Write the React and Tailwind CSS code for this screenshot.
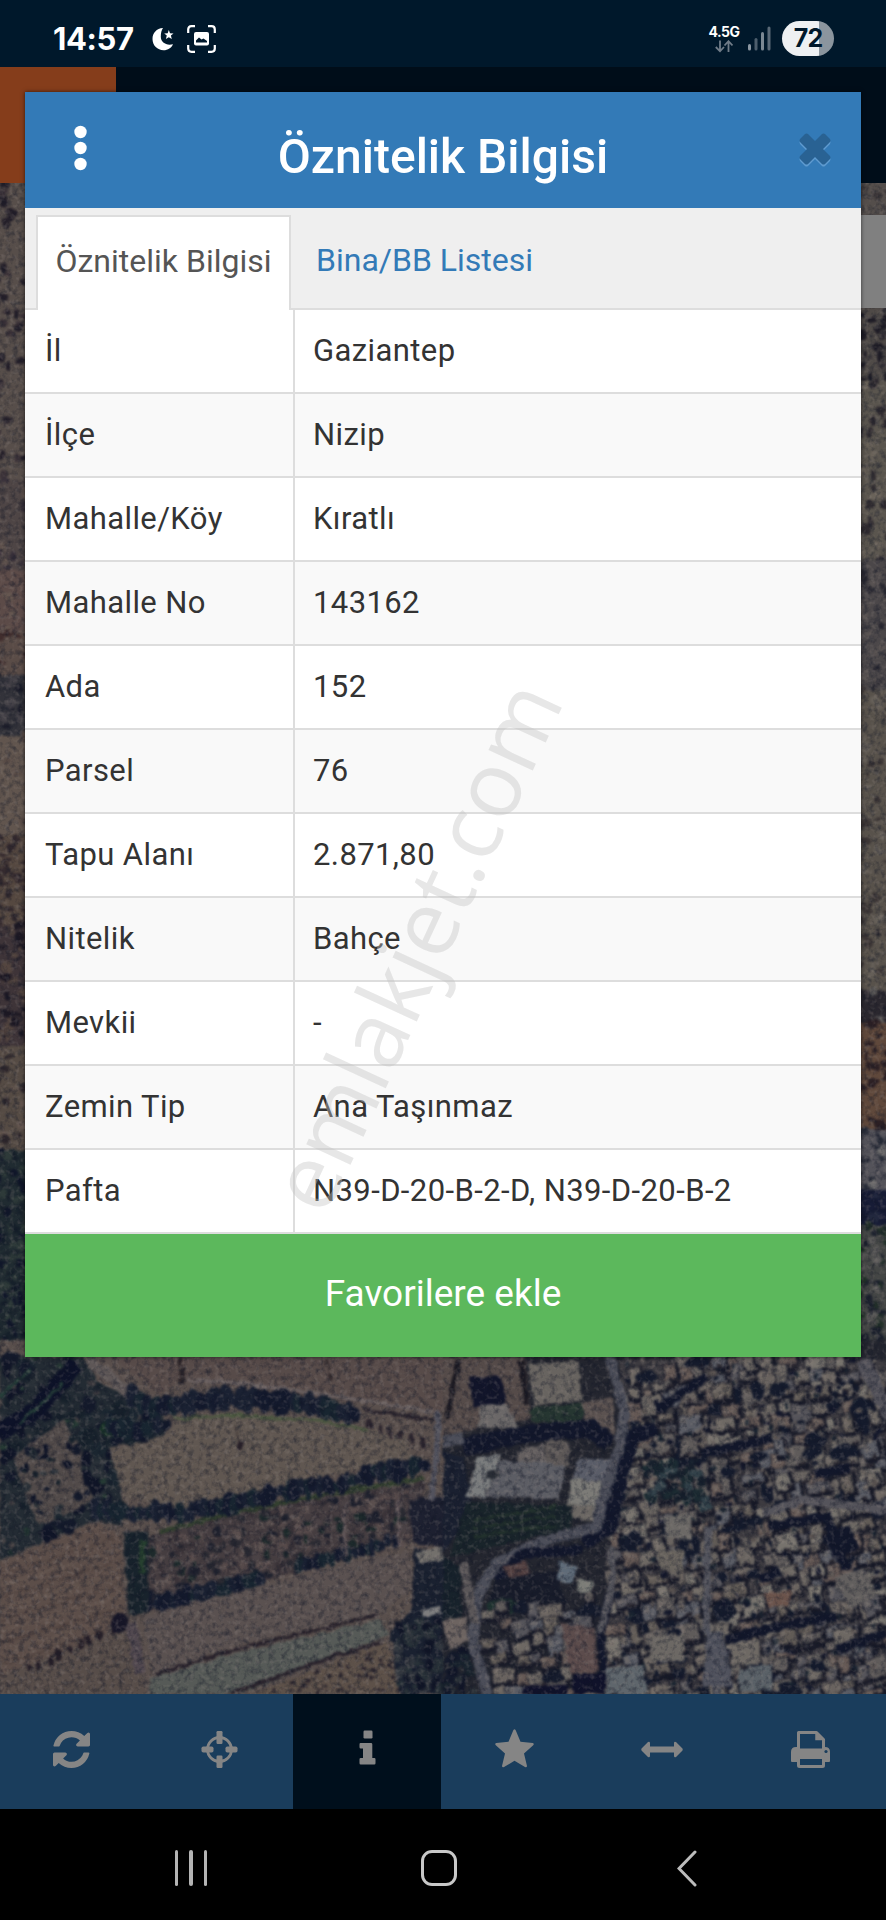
import React from 'react'

const rows = [
  { label: 'İl', value: 'Gaziantep' },
  { label: 'İlçe', value: 'Nizip' },
  { label: 'Mahalle/Köy', value: 'Kıratlı' },
  { label: 'Mahalle No', value: '143162' },
  { label: 'Ada', value: '152' },
  { label: 'Parsel', value: '76' },
  { label: 'Tapu Alanı', value: '2.871,80' },
  { label: 'Nitelik', value: 'Bahçe' },
  { label: 'Mevkii', value: '-' },
  { label: 'Zemin Tip', value: 'Ana Taşınmaz' },
  { label: 'Pafta', value: 'N39-D-20-B-2-D, N39-D-20-B-2' },
]

// small seeded generator so the map looks the same on every render
function rng(seed) {
  let s = seed
  return () => {
    s = (s * 1664525 + 1013904223) % 4294967296
    return s / 4294967296
  }
}

function inside(px, py, pts) {
  let hit = false
  for (let i = 0, j = pts.length - 1; i < pts.length; j = i++) {
    const [xi, yi] = pts[i]
    const [xj, yj] = pts[j]
    if (yi > py !== yj > py && px < ((xj - xi) * (py - yi)) / (yj - yi) + xi) hit = !hit
  }
  return hit
}

const toPoints = (pts) => pts.map((p) => p.join(',')).join(' ')

// blobs scattered in a polygon
function Scatter({ area, count, min = 8, max = 22, colors, seed }) {
  const r = rng(seed)
  const xs = area.map((p) => p[0])
  const ys = area.map((p) => p[1])
  const x0 = Math.min(...xs), x1 = Math.max(...xs)
  const y0 = Math.min(...ys), y1 = Math.max(...ys)
  const items = []
  for (let i = 0; i < count; i++) {
    const x = x0 + r() * (x1 - x0)
    const y = y0 + r() * (y1 - y0)
    const rx = min + r() * (max - min)
    const ry = min + r() * (max - min)
    const c = colors[Math.floor(r() * colors.length)]
    if (inside(x, y, area)) items.push(<ellipse key={i} cx={x} cy={y} rx={rx} ry={ry} fill={c} />)
  }
  return <g>{items}</g>
}

// trees standing along a line
function TreeRow({ path, width = 26, step = 17, colors = ['#141a2d', '#1a2132', '#182530'], seed }) {
  const r = rng(seed)
  const items = []
  for (let i = 0; i < path.length - 1; i++) {
    const [ax, ay] = path[i]
    const [bx, by] = path[i + 1]
    const n = Math.max(1, Math.round(Math.hypot(bx - ax, by - ay) / step))
    for (let k = 0; k < n; k++) {
      const t = k / n
      items.push(
        <ellipse
          key={`${i}-${k}`}
          cx={ax + (bx - ax) * t + (r() - 0.5) * 10}
          cy={ay + (by - ay) * t + (r() - 0.5) * 14}
          rx={width * (0.3 + r() * 0.3)}
          ry={width * (0.5 + r() * 0.6)}
          fill={colors[Math.floor(r() * colors.length)]}
        />
      )
    }
  }
  return <g>{items}</g>
}

function Houses({ area, seed, cell = 50 }) {
  const r = rng(seed)
  const roofs = ['#68635f', '#5f5b5a', '#6d6863', '#615b56', '#5a5c64', '#69635f', '#55545a', '#645854', '#77736d']
  const items = []
  const xs = area.map((p) => p[0])
  const ys = area.map((p) => p[1])
  for (let y = Math.min(...ys); y < Math.max(...ys); y += cell) {
    for (let x = Math.min(...xs); x < Math.max(...xs); x += cell) {
      const cx = x + (r() - 0.5) * 30
      const cy = y + (r() - 0.5) * 30
      const w = 24 + r() * 46
      const h = 20 + r() * 40
      const a = -10 + (r() - 0.5) * 16
      const c = roofs[Math.floor(r() * roofs.length)]
      const skip = r() < 0.1
      const tx = (r() - 0.5) * 30
      if (!inside(cx, cy, area)) continue
      items.push(
        <g key={`${x}-${y}`} transform={`translate(${cx} ${cy}) rotate(${a})`}>
          {skip ? (
            <ellipse rx={w * 0.6} ry={h * 0.55} fill="#151b2c" />
          ) : (
            <>
              <rect x={-w / 2 - 3} y={-h / 2 - 2} width={w + 12} height={h + 14} fill="#181a27" />
              <rect x={-w / 2} y={-h / 2} width={w} height={h} fill={c} />
              <rect x={tx} y={h / 2 - 8} width={w * 0.35} height={10} fill="#2a2830" />
              <rect x={-w / 2 + 4} y={-h / 2 + 4} width={w * 0.3} height={h * 0.4} fill="#7b746e" opacity="0.5" />
            </>
          )}
        </g>
      )
    }
  }
  return <g>{items}</g>
}

const DARK = ['#141a2b', '#17212b', '#1b2630', '#101527', '#2a3138']
const BUSH = ['#20222e', '#2a2a32', '#1d2a2b', '#4a4245', '#3a3338', '#564a4a', '#5a4f4e']

const woods = [[0, 50], [250, 50], [300, 130], [440, 190], [510, 250], [490, 290], [330, 320], [365, 470], [370, 560], [290, 540], [0, 660]]
const grove = [[40, 350], [190, 240], [240, 320], [250, 430], [290, 480], [120, 560], [90, 500]]
const field = [[330, 330], [490, 290], [540, 235], [700, 225], [950, 240], [1220, 290], [1235, 355], [1100, 385], [850, 430], [720, 480], [500, 525], [430, 480], [372, 472]]
const scrub = [[440, 590], [730, 500], [1280, 430], [1240, 600], [1050, 650], [800, 720], [560, 790], [440, 815]]
const plowed = [[0, 665], [290, 548], [362, 590], [376, 830], [300, 890], [0, 1010]]
const lowerField = [[430, 830], [700, 760], [1040, 670], [1225, 635], [1240, 740], [1150, 815], [700, 915], [460, 1010]]
const paleStrip = [[450, 1015], [700, 940], [1140, 840], [1165, 885], [720, 1062], [450, 1062]]
const orchard = [[760, 1062], [1160, 905], [1210, 1062]]

function Countryside() {
  return (
    <g transform="translate(0 1340) scale(0.33333)">
      <rect width="1330" height="1080" fill="#594f4c" />
      <polygon points="330,50 1330,50 1330,225 1080,190 850,160 540,120 480,165" fill="#574b49" />
      <path d="M560 120 L740 130 L980 165 L1300 215" stroke="#6a6161" strokeWidth="11" fill="none" />
      <path d="M1090 208 L1300 240" stroke="#29232c" strokeWidth="10" fill="none" />
      <polygon points={toPoints(woods)} fill="#232b33" />
      <Scatter area={woods} count={210} colors={DARK} min={9} max={28} seed={11} />
      <Scatter area={woods} count={70} colors={['#3c4045', '#4b4647', '#263a34']} min={4} max={11} seed={12} />
      <polygon points={toPoints(grove)} fill="#514a49" />
      <Scatter area={grove} count={60} colors={DARK} min={6} max={17} seed={5} />
      <path d="M-10 280 L110 210 L230 70" stroke="#0d1228" strokeWidth="52" fill="none" />
      <path d="M0 170 L90 90 M60 250 L190 130" stroke="#27403a" strokeWidth="9" fill="none" />
      <path d="M265 60 L330 110 L400 175 L430 220" stroke="#5e5757" strokeWidth="32" fill="none" />
      <ellipse cx="340" cy="265" rx="38" ry="28" fill="#1f3d2b" />
      <polygon points={toPoints(field)} fill="#605751" />
      <path d="M520 235 L700 226 L950 242 L1100 270" stroke="#4b5740" strokeWidth="9" fill="none" />
      <ellipse cx="719" cy="316" rx="10" ry="17" fill="#261f28" />
      <path d="M719 300 L706 255" stroke="#453c3a" strokeWidth="4" />
      <TreeRow path={[[400, 165], [450, 205], [690, 175], [880, 185], [1080, 225]]} width={38} seed={3} />
      <TreeRow path={[[330, 260], [410, 270], [490, 255]]} width={32} seed={8} />
      <TreeRow path={[[1110, 260], [1200, 285], [1300, 320]]} width={20} step={34} seed={19} colors={['#2b242d']} />
      <TreeRow path={[[545, 60], [550, 140]]} width={18} seed={17} colors={['#2c2529']} />
      <TreeRow path={[[985, 60], [985, 130]]} width={12} seed={18} colors={['#2c2529']} />
      <polygon points={toPoints(scrub)} fill="#453d40" />
      <Scatter area={scrub} count={520} colors={BUSH} min={5} max={18} seed={21} />
      <path d="M480 575 L740 510 L1000 460 L1270 415" stroke="#33402f" strokeWidth="14" fill="none" />
      <TreeRow path={[[290, 500], [420, 520], [560, 515], [720, 485], [860, 450], [1010, 435], [1110, 400], [1290, 375]]} width={34} seed={6} />
      <TreeRow path={[[450, 790], [580, 765], [800, 715]]} width={34} seed={31} />
      <TreeRow path={[[900, 680], [1050, 640], [1200, 600]]} width={24} seed={32} />
      <path d="M1030 510 L1040 650 M1195 480 L1195 620" stroke="#655a5c" strokeWidth="8" />
      <polygon points={toPoints(plowed)} fill="#5c4e49" />
      {[0, 1, 2, 3, 4, 5, 6, 7, 8].map((i) => (
        <path key={i} d={`M0 ${705 + i * 34} L${i < 7 ? 362 : 300} ${590 + i * 36}`} stroke={i % 2 ? '#685a53' : '#4d403d'} strokeWidth="4" />
      ))}
      <polygon points="0,1010 300,890 390,880 440,1062 0,1062" fill="#574d49" />
      <TreeRow path={[[90, 990], [180, 950], [300, 885], [370, 860]]} width={18} step={34} seed={42} colors={['#241e27']} />
      <ellipse cx="358" cy="850" rx="26" ry="32" fill="#171627" />
      <polygon points="370,575 445,575 445,820 385,825" fill="#18232c" />
      <path d="M428 600 L425 700" stroke="#27402f" strokeWidth="20" />
      <path d="M395 850 L420 1000" stroke="#51484f" strokeWidth="34" />
      <polygon points={toPoints(lowerField)} fill="#5a5150" />
      <polygon points={toPoints(paleStrip)} fill="#565a57" />
      <path d="M470 1002 L700 930 L1130 825" stroke="#28222b" strokeWidth="10" fill="none" />
      <path d="M690 1062 L1010 945 L1140 908" stroke="#28222b" strokeWidth="11" fill="none" />
      <polygon points={toPoints(orchard)} fill="#5d5149" />
      <Scatter area={orchard} count={90} colors={['#2a242c']} min={4} max={8} seed={51} />
      <polygon points="1240,620 1330,640 1330,1062 1200,1062 1170,880 1240,800" fill="#1a2130" />
      <Scatter area={[[1180, 860], [1330, 830], [1330, 1062], [1200, 1062]]} count={80} colors={['#283138', '#101526', '#33383f']} min={7} max={18} seed={52} />
      <polygon points="1250,635 1330,618 1330,660 1255,670" fill="#73706c" />
      <polygon points="1262,810 1320,798 1325,822 1268,830" fill="#7d7d7e" />
      <polygon points="1225,480 1330,470 1330,620 1240,610" fill="#1d2030" />
      <path d="M1315 215 L1310 340 L1295 480" stroke="#52525d" strokeWidth="18" fill="none" />
    </g>
  )
}

const town = [[530, 60], [1330, 60], [1330, 1080], [470, 1080], [500, 560], [560, 300]]
const southBlock = [[130, 800], [480, 760], [470, 1080], [150, 1080]]

function Town() {
  return (
    <g transform="translate(443 1340) scale(0.33333)">
      <rect width="1332" height="1080" fill="#24262f" />
      <polygon points="0,50 245,50 265,240 0,285" fill="#554b49" />
      <path d="M45 60 L10 240 M235 60 L250 190" stroke="#1c1a22" strokeWidth="16" />
      <polygon points="80,112 172,108 190,190 90,205" fill="#12152a" />
      <polygon points="110,195 190,190 225,262 105,265" fill="#6b6868" />
      <polygon points="255,75 405,64 420,180 275,200" fill="#686460" />
      <polygon points="260,205 420,190 420,245 270,245" fill="#263631" />
      <polygon points="415,190 510,170 515,300 440,280" fill="#5b5250" />
      <polygon points={toPoints(town)} fill="#3d3b40" />
      <Houses area={town} seed={77} />
      <Houses area={town} seed={1234} cell={92} />
      <Scatter area={town} count={620} colors={['#141a2b', '#1a2430', '#6d6762', '#14182b', '#57514f', '#625c5a']} min={3} max={11} seed={78} />
      <Scatter area={[[600, 360], [780, 380], [800, 520], [620, 480]]} count={60} colors={['#1c2b32', '#17202c', '#33424a']} min={8} max={20} seed={90} />
      <path d="M640 210 L790 110 M780 340 L990 295 M1115 400 L1220 385 M980 560 L1150 530 L1210 690 M950 720 L1010 690 M850 900 L1000 860 L1180 830 M1180 930 L1330 880" stroke="#12172a" strokeWidth="28" fill="none" />
      <path d="M1180 570 L1210 640" stroke="#12172a" strokeWidth="85" />
      <path d="M60 320 L260 280 L440 265 L500 310" stroke="#12172b" strokeWidth="54" fill="none" />
      <path d="M640 265 L570 290 L535 400 L500 560 L420 610" stroke="#12172b" strokeWidth="44" fill="none" />
      <path d="M500 760 L475 870 L475 1060" stroke="#12172b" strokeWidth="24" fill="none" />
      <polygon points="0,330 60,350 90,500 0,640" fill="#1a2030" />
      <polygon points="105,350 175,343 125,475 70,470" fill="#7a7c7d" />
      <polygon points="170,362 370,362 350,478 128,470" fill="#5c5d64" />
      <polygon points="220,335 300,310 310,365 230,365" fill="#656060" />
      <polygon points="305,300 380,305 378,380 308,370" fill="#5d5857" />
      <ellipse cx="150" cy="404" rx="20" ry="14" fill="#282c34" />
      <polygon points="405,355 505,360 485,425 390,415" fill="#5a5d68" />
      <polygon points="388,415 484,425 462,500 372,495" fill="#7c7b77" />
      <polygon points="368,495 462,500 450,545 362,530" fill="#6b6763" />
      <polygon points="70,485 385,500 385,565 20,650" fill="#19242a" />
      {[0, 1, 2].map((i) => (
        <path key={i} d={`M90 ${540 + i * 25} L340 ${500 + i * 28}`} stroke="#24332d" strokeWidth="8" />
      ))}
      <path d="M500 50 L545 210 L530 320 L490 440 L460 560 L300 605 L160 670 L105 760 L90 900 L135 1070" stroke="#4c4e59" strokeWidth="32" fill="none" strokeLinejoin="round" />
      <path d="M0 305 L60 295" stroke="#4c4e59" strokeWidth="36" />
      <path d="M60 670 L95 850" stroke="#5a5658" strokeWidth="26" />
      <polygon points="0,650 50,680 55,830 0,840" fill="#17222b" />
      <path d="M160 720 L240 640 L420 630" stroke="#12172b" strokeWidth="30" fill="none" />
      <polygon points="180,680 250,660 260,700 215,760" fill="#513f40" />
      <polygon points="160,720 340,690 370,790 130,810" fill="#181c2a" />
      <ellipse cx="180" cy="800" rx="50" ry="24" fill="#1f3330" />
      <polygon points="350,665 405,680 385,735 340,720" fill="#5f6b78" />
      <polygon points="405,715 450,722 440,762 400,755" fill="#7c7d78" />
      <path d="M505 620 L510 720 L470 880" stroke="#53535a" strokeWidth="18" fill="none" />
      <path d="M795 560 L790 870 L825 960 L820 1070" stroke="#52535c" strokeWidth="22" fill="none" />
      <polygon points="790,870 840,880 870,1040 780,1040" fill="#50525d" />
      <path d="M960 520 L1080 480 L1330 510" stroke="#55545b" strokeWidth="26" fill="none" />
      <path d="M1260 60 L1340 230" stroke="#53525a" strokeWidth="42" fill="none" />
      <Houses area={southBlock} seed={15} />
      <polygon points="0,840 70,830 75,900 20,930" fill="#6d6461" />
      <Scatter area={[[0, 930], [70, 930], [110, 1070], [0, 1070]]} count={30} colors={DARK} seed={16} />
      <polygon points="350,850 455,865 468,1000 385,1000" fill="#5c4c4c" />
      <rect x="390" y="1002" width="95" height="60" fill="#10122a" />
      <rect x="240" y="1035" width="135" height="30" fill="#10122a" />
      <polygon points="488,985 600,975 608,1062 490,1062" fill="#5f666c" />
      <polygon points="660,530 745,525 745,600 665,595" fill="#6c6966" />
      <polygon points="640,632 722,630 720,695 655,690" fill="#6a655f" />
      <polygon points="620,890 720,880 725,965 625,960" fill="#6c6864" />
      <polygon points="860,910 950,898 950,970 870,975" fill="#6e6964" />
      <polygon points="885,990 985,970 990,1050 890,1055" fill="#5b6268" />
      <polygon points="1170,710 1265,685 1300,770 1220,805" fill="#625f5e" />
      <polygon points="965,760 1045,750 1040,795 975,800" fill="#6b544c" />
    </g>
  )
}

// narrow parts of the map at both sides of the dialog
const leftBands = [
  { y: 180, h: 300, fill: '#574e4a', dots: 55, colors: ['#241f29', '#3b3238'] },
  { y: 480, h: 90, fill: '#4e4545', dots: 20, colors: ['#38303a', '#5e514c'] },
  { y: 570, h: 60, fill: '#5c4b48', dots: 5, colors: ['#655750'] },
  { y: 630, h: 45, fill: '#5a4c47', dots: 8, colors: ['#402d2d'] },
  { y: 675, h: 60, fill: '#33333a', dots: 25, colors: ['#1a1b28', '#454248'] },
  { y: 735, h: 100, fill: '#61554e', dots: 8, colors: ['#574a45'] },
  { y: 835, h: 90, fill: '#554840', dots: 40, colors: ['#342a2e'] },
  { y: 925, h: 120, fill: '#3e3438', dots: 50, colors: ['#1c1823', '#53453f'] },
  { y: 1045, h: 105, fill: '#554b44', dots: 26, colors: ['#2d262b', '#655750'] },
  { y: 1150, h: 220, fill: '#202b31', dots: 110, colors: ['#101629', '#16202a', '#2e3a39'] },
]
const rightBands = [
  { y: 180, h: 36, fill: '#544e4b', dots: 8, colors: ['#3b3638'] },
  { y: 308, h: 72, fill: '#4f4a47', dots: 30, colors: ['#1e1c25', '#3a363a'] },
  { y: 380, h: 180, fill: '#5a554e', dots: 50, colors: ['#2f2b30', '#6a635a'] },
  { y: 560, h: 130, fill: '#4b4749', dots: 36, colors: ['#2c2b33', '#5a5453'] },
  { y: 690, h: 300, fill: '#58524b', dots: 80, colors: ['#3b3535', '#655f58'] },
  { y: 990, h: 32, fill: '#2a272e', dots: 5, colors: ['#5f5c5a'] },
  { y: 1022, h: 108, fill: '#5f483b', dots: 26, colors: ['#2c2024'] },
  { y: 1130, h: 60, fill: '#54535a', dots: 22, colors: ['#282c38', '#6b6a6b'] },
  { y: 1190, h: 35, fill: '#171c36', dots: 5, colors: ['#22283e'] },
  { y: 1225, h: 140, fill: '#444645', dots: 60, colors: ['#1c212d', '#5b5a59', '#223029'] },
]

function Strip({ x, bands }) {
  return bands.map((b, i) => (
    <g key={b.y}>
      <rect x={x} y={b.y} width="46" height={b.h} fill={b.fill} />
      <Scatter area={[[x, b.y], [x + 46, b.y], [x + 46, b.y + b.h], [x, b.y + b.h]]} count={b.dots} colors={b.colors} min={2} max={5.5} seed={100 + i + x} />
    </g>
  ))
}

function AerialMap() {
  return (
    <svg className="block h-[1511px] w-full" viewBox="0 183 886 1511">
      <defs>
        <filter id="terrain" x="0" y="0" width="100%" height="100%" colorInterpolationFilters="sRGB">
          <feTurbulence type="fractalNoise" baseFrequency="0.12" numOctaves="2" seed="4" result="n" />
          <feDisplacementMap in="SourceGraphic" in2="n" scale="6" xChannelSelector="R" yChannelSelector="G" result="d" />
          <feGaussianBlur in="d" stdDeviation="1" />
        </filter>
        <filter id="shade" x="0" y="0" width="100%" height="100%" colorInterpolationFilters="sRGB">
          <feTurbulence type="fractalNoise" baseFrequency="0.16" numOctaves="3" seed="9" />
          <feColorMatrix values="0 0 0 0 0.06  0 0 0 0 0.08  0 0 0 0 0.14  1.8 0 0 0 -0.8" />
        </filter>
        <filter id="light" x="0" y="0" width="100%" height="100%" colorInterpolationFilters="sRGB">
          <feTurbulence type="fractalNoise" baseFrequency="0.2" numOctaves="2" seed="23" />
          <feColorMatrix values="0 0 0 0 0.6  0 0 0 0 0.56  0 0 0 0 0.54  1.4 0 0 0 -0.7" />
        </filter>
      </defs>
      <rect y="183" width="886" height="1511" fill="#4a4344" />
      <g filter="url(#terrain)">
        <Strip x={-6} bands={leftBands} />
        <Strip x={850} bands={rightBands} />
        <Countryside />
        <Town />
      </g>
      <rect y="183" width="886" height="1511" filter="url(#shade)" opacity="0.6" />
      <rect y="183" width="886" height="1511" filter="url(#light)" opacity="0.5" />
      <rect x="850" y="215" width="36" height="93" fill="#808080" />
    </svg>
  )
}

function StatusBar() {
  return (
    <div className="flex h-[67px] shrink-0 items-start bg-[#00182b] pl-[53px] pr-[52px] font-['Inter',sans-serif] text-white">
      <span className="mt-[20px] w-[82px] whitespace-nowrap text-[31px] font-bold leading-[38px] tracking-[-0.4px]">14:57</span>
      <svg className="ml-[17px] mt-[27px]" width="23" height="24" viewBox="0 0 23 24" fill="#fff">
        <path d="M11 1 C4.500 1.500 0.500 6 0.500 12 C0.500 18.500 5.500 23.200 11.500 23.200 C16 23.200 19.500 20.800 21 17.200 C14.500 19 8.800 15.500 8.800 9.800 C8.800 6 9.500 3 11 1 Z" />
        <path d="M16.800 3 L18 6.200 L21.500 6.400 L18.900 8.600 L19.800 12 L16.800 10.200 L13.900 12 L14.800 8.600 L12.200 6.400 L15.700 6.200 Z" />
      </svg>
      <svg className="ml-[12px] mt-[25px]" width="29" height="28" viewBox="0 0 29 28" fill="none">
        <path d="M1.200 8 V4.500 Q1.200 1.200 4.500 1.200 H8 M21 1.200 H24.500 Q27.800 1.200 27.800 4.500 V8 M27.800 20 V23.500 Q27.800 26.800 24.500 26.800 H21 M8 26.800 H4.500 Q1.200 26.800 1.200 23.500 V20" stroke="#fff" strokeWidth="2.200" />
        <rect x="7" y="7" width="15" height="13.500" rx="2" fill="#fff" />
        <path d="M9 17.500 V15.500 L12 12.500 L14.500 14.500 L16.500 13.500 L20 16 V17.500 Z" fill="#00182b" />
      </svg>
      <div className="ml-auto mt-[25px] flex w-[30px] flex-col items-center">
        <span className="whitespace-nowrap text-[14px] font-bold leading-[14px] tracking-[-0.5px]">4.5G</span>
        <svg className="mt-[1px]" width="18" height="13" viewBox="0 0 18 13" fill="none" stroke="#707c88" strokeWidth="1.800">
          <path d="M5 0.500 V11 M0.800 7 L5 11.300 L9 7" />
          <path d="M13.500 12 V1.500 M9.500 5.500 L13.500 1.200 L17.500 5.500" />
        </svg>
      </div>
      <svg className="ml-[9px] mt-[26px]" width="23" height="25" viewBox="0 0 23 25">
        <rect x="0" y="18" width="3" height="6.500" rx="1.500" fill="#8b97a2" />
        <rect x="6.500" y="12" width="3" height="12.500" rx="1.500" fill="#4d5e6d" />
        <rect x="13" y="6" width="3" height="18.500" rx="1.500" fill="#7b8893" />
        <rect x="19.500" y="0.500" width="3" height="24" rx="1.500" fill="#5a6977" />
      </svg>
      <div className="ml-[11px] mt-[21px] flex h-[35px] w-[52px] items-center justify-center overflow-hidden rounded-full bg-[linear-gradient(to_right,#eef0f2_72%,#8b959e_72%)]">
        <span className="text-[25px] font-bold leading-[35px] tracking-[-1px] text-[#00182b]">72</span>
      </div>
    </div>
  )
}

const tools = [
  {
    name: 'refresh',
    icon: (
      <svg width="37" height="37" viewBox="0 0 1536 1536" fill="currentColor">
        <path d="M1511 928q0 5-1 7-64 268-268 434.500t-478 166.500q-146 0-282.500-55t-243.500-157l-129 129q-19 19-45 19t-45-19-19-45v-448q0-26 19-45t45-19h448q26 0 45 19t19 45-19 45l-137 137q71 66 161 102t187 36q134 0 250-65t186-179q11-17 53-117 8-23 30-23h192q13 0 22.500 9.500t9.500 22.500zm25-800v448q0 26-19 45t-45 19h-448q-26 0-45-19t-19-45 19-45l138-138q-148-137-349-137-134 0-250 65t-186 179q-11 17-53 117-8 23-30 23h-199q-13 0-22.500-9.500t-9.500-22.500v-7q65-268 270-434.500t480-166.500q146 0 284 55.500t245 156.500l130-129q19-19 45-19t45 19 19 45z" />
      </svg>
    ),
  },
  {
    name: 'locate',
    icon: (
      <svg width="37" height="37" viewBox="0 0 37 37" fill="currentColor">
        <circle cx="18.500" cy="18.500" r="12" fill="none" stroke="currentColor" strokeWidth="2.800" />
        <rect x="15.500" y="0" width="6" height="13" rx="1.200" />
        <rect x="15.500" y="24.500" width="6" height="12.500" rx="1.200" />
        <rect x="0.500" y="15.500" width="12" height="6" rx="1.800" />
        <rect x="24.500" y="15.500" width="12" height="6" rx="1.800" />
      </svg>
    ),
  },
  {
    name: 'info',
    active: true,
    icon: (
      <svg className="-mt-[3px]" width="17" height="35" viewBox="0 0 17 35" fill="currentColor">
        <rect x="4.500" y="0.500" width="9" height="8" rx="1.200" />
        <path d="M1.500 13 H12 Q13.300 13 13.300 14.300 V28 H15.300 Q16.500 28 16.500 29.200 V33.200 Q16.500 34.500 15.300 34.500 H1.700 Q0.500 34.500 0.500 33.200 V29.200 Q0.500 28 1.700 28 H4 V18.500 H1.700 Q0.500 18.500 0.500 17.300 V14.200 Q0.500 13 1.500 13 Z" />
      </svg>
    ),
  },
  {
    name: 'favorite',
    icon: (
      <svg className="-mt-[2px]" width="39" height="39" viewBox="0 0 39 39" fill="currentColor">
        <path d="M18.300 1.200 Q19.500 -0.500 20.700 1.200 L25.500 12.800 L37.800 14 Q39.600 14.700 38.200 16.200 L29 24.500 L32 37 Q31.800 38.800 30 38 L19.500 31.800 L9 38 Q7.200 38.800 7 37 L10 24.500 L0.800 16.200 Q-0.600 14.700 1.200 14 L13.500 12.800 Z" />
      </svg>
    ),
  },
  {
    name: 'measure',
    icon: (
      <svg className="mt-px" width="42" height="17" viewBox="0 0 42 17" fill="currentColor">
        <path d="M0.500 7.500 L7 1 Q8.800 0 9 2 V5.500 H33 V2 Q33.200 0 35 1 L41.500 7.500 Q42 8.500 41.500 9.500 L35 16 Q33.200 17 33 15 V11.500 H9 V15 Q8.800 17 7 16 L0.500 9.500 Q0 8.500 0.500 7.500 Z" />
      </svg>
    ),
  },
  {
    name: 'print',
    icon: (
      <svg width="39" height="37" viewBox="0 0 39 37" fill="none">
        <path d="M0 21 Q0 16 5 16 H34 Q39 16 39 21 V30 Q39 31 38 31 H1 Q0 31 0 30 Z" fill="currentColor" />
        <path d="M7.500 19 V1.500 H25.500 L32.500 8.500 V19 Z" fill="#1a3d5c" stroke="currentColor" strokeWidth="3" strokeLinejoin="round" />
        <path d="M25 1.500 V8.500 H32.500 Z" fill="currentColor" stroke="currentColor" strokeWidth="1.500" />
        <rect x="6" y="18.500" width="28" height="9" fill="currentColor" />
        <rect x="7.500" y="26.500" width="25" height="9" rx="1" fill="#1a3d5c" stroke="currentColor" strokeWidth="3" />
        <circle cx="35" cy="20.500" r="1.600" fill="#1a3d5c" />
      </svg>
    ),
  },
]

function Toolbar() {
  return (
    <div className="flex h-[115px] shrink-0 overflow-hidden bg-[#1a3d5c]">
      <div className="-ml-[2px] grid w-[886px] shrink-0 grid-cols-6 text-[#858585]">
        {tools.map((tool) => (
          <button key={tool.name} className={`flex items-center justify-center pb-[5px] ${tool.active ? 'bg-[#000f1c]' : ''}`}>
            {tool.icon}
          </button>
        ))}
      </div>
    </div>
  )
}

function NavBar() {
  return (
    <div className="flex h-[111px] shrink-0 items-center bg-black pl-[67px] pt-[7px]">
      <div className="flex w-[248px] justify-center gap-[11px]">
        <span className="h-[36px] w-[3.5px] rounded-full bg-[#b4b4b4]" />
        <span className="h-[36px] w-[3.5px] rounded-full bg-[#b4b4b4]" />
        <span className="h-[36px] w-[3.5px] rounded-full bg-[#b4b4b4]" />
      </div>
      <div className="flex w-[248px] justify-center">
        <span className="h-[36px] w-[36px] rounded-[11px] border-[3px] border-[#c8c8c8]" />
      </div>
      <div className="flex w-[248px] justify-center">
        <svg width="20" height="37" viewBox="0 0 20 37" fill="none" stroke="#bdbdbd" strokeWidth="3" strokeLinecap="round">
          <path d="M18 2 L2 18.500 L18 35" />
        </svg>
      </div>
    </div>
  )
}

function Dialog() {
  return (
    <div className="absolute left-[25px] top-[92px] flex h-[1265px] w-[836px] flex-col bg-white shadow-[0_0_4px_rgba(0,0,0,0.6)]">
      <div className="flex h-[116px] shrink-0 items-start bg-[#337ab7]">
        <svg className="ml-[49px] mt-[33px]" width="13" height="46" viewBox="0 0 13 46" fill="#fff">
          <circle cx="6.500" cy="7" r="6.200" />
          <circle cx="6.500" cy="23" r="6.200" />
          <circle cx="6.500" cy="39" r="6.200" />
        </svg>
        <h1 className="mt-[36px] flex-1 text-center text-[48px] font-medium leading-[58px] text-white">Öznitelik Bilgisi</h1>
        <svg className="mr-[30px] mt-[41px]" width="32" height="34" viewBox="0 0 32 34">
          <path d="M9 1 L16 8 L23 1 Q24.500 0 26 1 L31 6 Q32 7.500 31 9 L24 16 L31 23 Q32 24.500 31 26 L26 31 Q24.500 32 23 31 L16 24 L9 31 Q7.500 32 6 31 L1 26 Q0 24.500 1 23 L8 16 L1 9 Q0 7.500 1 6 L6 1 Q7.500 0 9 1 Z" transform="translate(0 2)" fill="#5f9bd0" />
          <path d="M9 1 L16 8 L23 1 Q24.500 0 26 1 L31 6 Q32 7.500 31 9 L24 16 L31 23 Q32 24.500 31 26 L26 31 Q24.500 32 23 31 L16 24 L9 31 Q7.500 32 6 31 L1 26 Q0 24.500 1 23 L8 16 L1 9 Q0 7.500 1 6 L6 1 Q7.500 0 9 1 Z" fill="#296293" />
        </svg>
      </div>
      <div className="flex h-[102px] shrink-0 items-end border-b-2 border-[#ddd] bg-[#efefef] pl-[11px] text-[32px]">
        <div className="-mb-[2px] flex h-[95px] w-[255px] items-center justify-center border-2 border-b-0 border-[#ddd] bg-white pb-[6px] text-[#555]">
          Öznitelik Bilgisi
        </div>
        <div className="flex h-[93px] items-center pb-[3px] pl-[25px] text-[#337ab7]">Bina/BB Listesi</div>
      </div>
      <div className="grid h-[924px] shrink-0 grid-rows-11 text-[31px] tracking-[0.4px] text-[#333]">
        {rows.map((row, i) => (
          <div key={row.label} className={`flex border-b-2 border-[#ddd] ${i % 2 ? 'bg-[#f9f9f9]' : 'bg-white'}`}>
            <div className="flex w-[270px] items-center border-r-2 border-[#ddd] pl-[20px]">{row.label}</div>
            <div className="flex items-center pl-[18px]">{row.value}</div>
          </div>
        ))}
      </div>
      <button className="flex-1 bg-[#5cb85c] pb-[3px] text-[37px] text-white">Favorilere ekle</button>
      <span className="pointer-events-none absolute left-[389px] top-[853px] -translate-x-1/2 -translate-y-1/2 -rotate-[65.200deg] whitespace-nowrap font-['Open_Sans','Noto_Sans',sans-serif] text-[91px] leading-none text-[#c4c4c4]/40">
        emlakjet.com
      </span>
    </div>
  )
}

export default function App() {
  return (
    <div className="relative flex h-[1920px] w-[886px] flex-col overflow-hidden bg-black font-['Roboto',sans-serif]">
      <StatusBar />
      <div className="flex h-[116px] shrink-0 bg-[#000d19]">
        <div className="w-[116px] bg-[#853d1b]" />
      </div>
      <AerialMap />
      <Toolbar />
      <NavBar />
      <Dialog />
    </div>
  )
}
